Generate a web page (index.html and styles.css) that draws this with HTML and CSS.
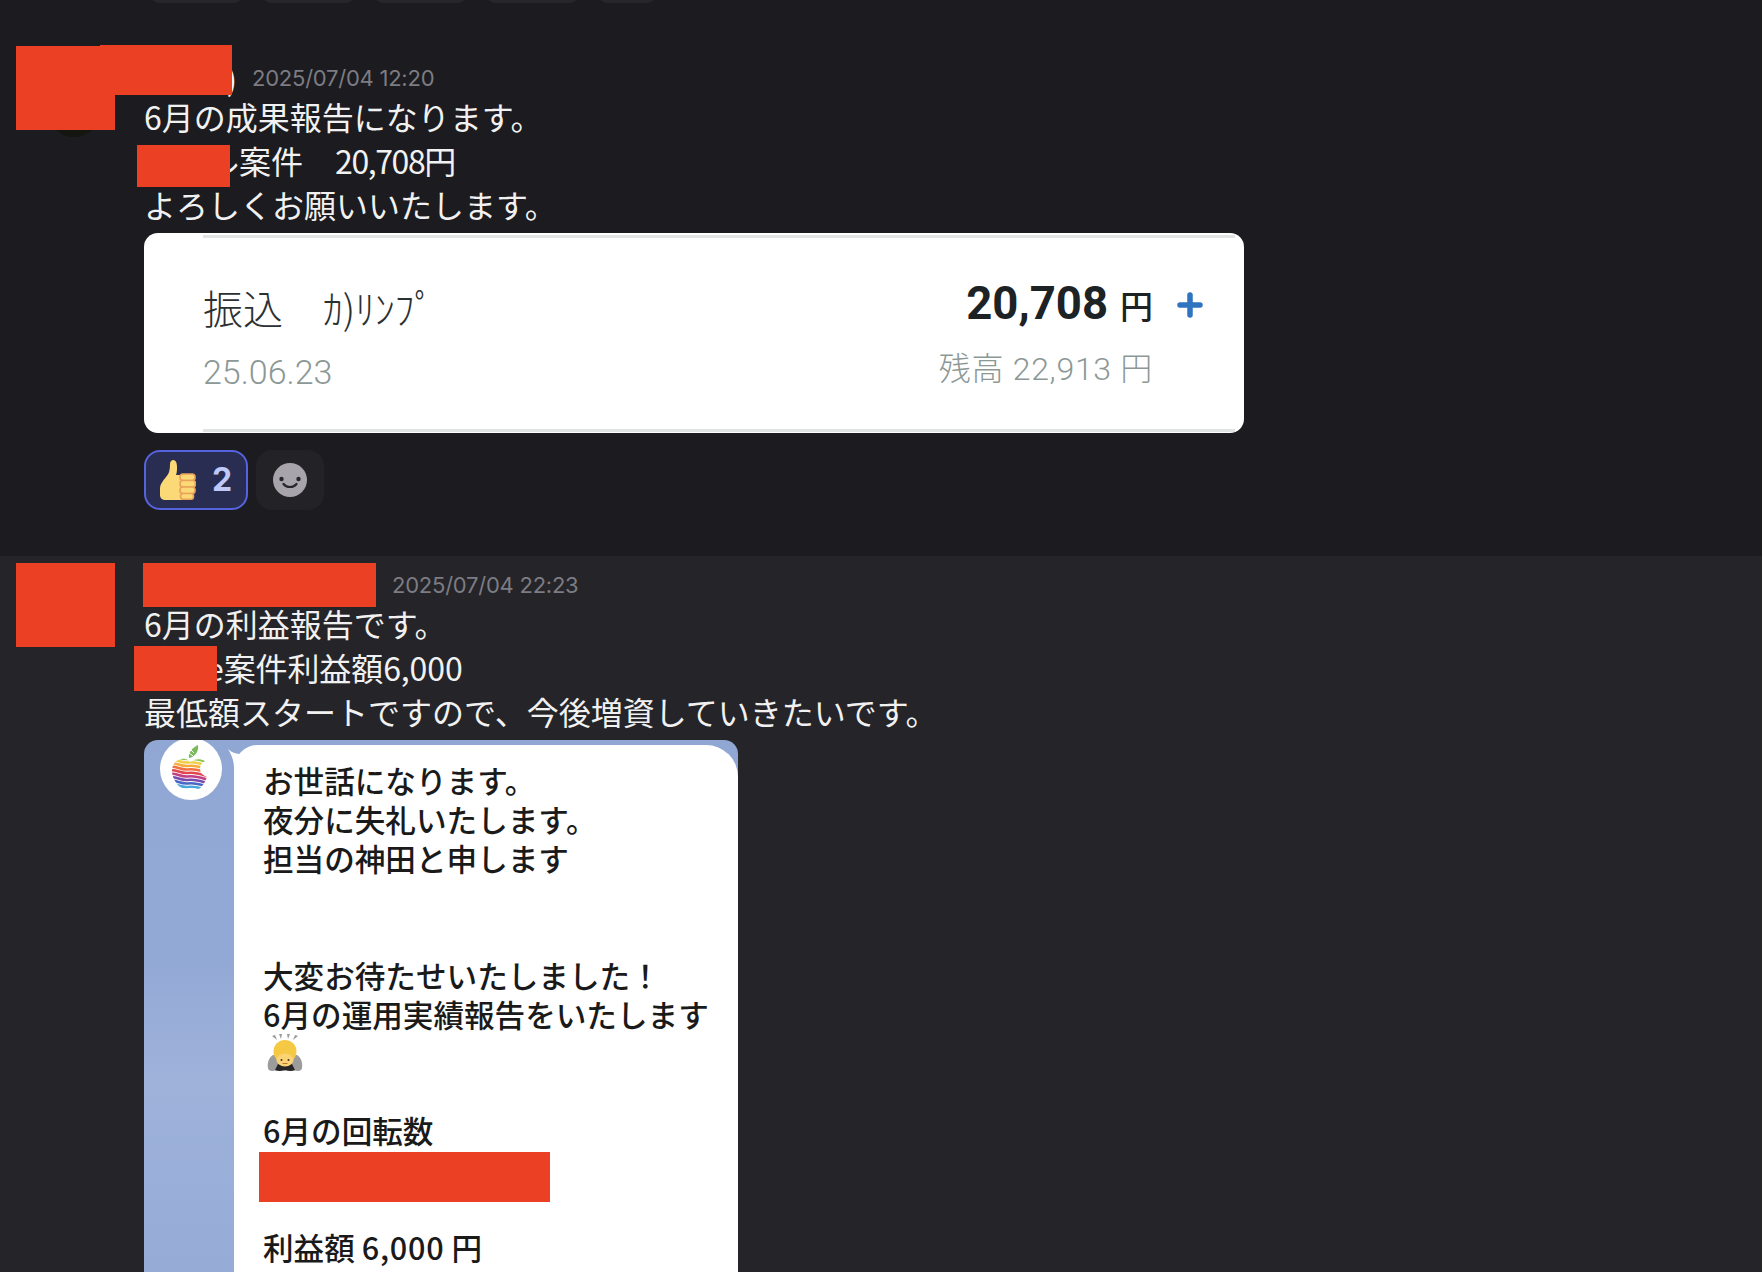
FILE: index.html
```html
<!DOCTYPE html>
<html lang="ja">
<head>
<meta charset="utf-8">
<title>成果報告</title>
<link rel="stylesheet" href="styles.css">
</head>
<body>
<main class="page">
  <div class="chips"><span class="chip"></span><span class="chip"></span><span class="chip"></span><span class="chip"></span><span class="chip chip-small"></span></div>

  <article class="msg msg-a">
    <div class="avatar-col"><div class="avatar"></div></div>
    <div class="msg-body">
      <header class="meta"><span class="name name-a">)</span><time class="stamp">2025/07/04 12:20</time></header>
      <p class="line">6月の成果報告になります。</p>
      <p class="line lead">ル案件　<span class="num-tight">20,708</span>円</p>
      <p class="line">よろしくお願いいたします。</p>
      <div class="bank-card">
        <div class="bank-inner">
          <div class="bank-left">
            <div class="bank-title">振込　<span class="kana">ｶ)ﾘﾝﾌﾟ</span></div>
            <div class="bank-date">25.06.23</div>
          </div>
          <div class="bank-right">
            <div class="amount"><span class="amount-num">20,708</span><span class="amount-yen">円</span></div>
            <svg class="plus" viewBox="0 0 26 26" aria-hidden="true"><path d="M13 3v20M3 13h20" fill="none" stroke="#2f74c0" stroke-width="5.5" stroke-linecap="round"/></svg>
            <div class="balance">残高 22,913 円</div>
          </div>
        </div>
      </div>
      <div class="reactions">
        <button class="react react-on">
          <svg class="thumb" viewBox="0 0 36 40" aria-hidden="true">
            <path d="M0 29c0-5 3-8 6-12 3-3 4-7 4-13 0-3 2-4 3-4 3 0 4 3 4 7 0 3 0 5-1 8h10v25H6c-4 0-6-2-6-5z" fill="#fcd977"/>
            <g fill="#fcd977" stroke="#e9a35a" stroke-width="1.7">
              <rect x="20" y="14" width="15" height="6.500" rx="3"/>
              <rect x="20" y="20.500" width="15.500" height="6.500" rx="3"/>
              <rect x="20" y="27" width="15" height="6.500" rx="3"/>
              <rect x="20.500" y="33.500" width="13" height="5.800" rx="2.800"/>
            </g>
          </svg>
          <span class="react-count">2</span>
        </button>
        <button class="react react-add">
          <svg class="face" viewBox="0 0 34 34" aria-hidden="true">
            <circle cx="17" cy="17" r="17" fill="#a7a5ab"/>
            <circle cx="8.500" cy="16" r="2.200" fill="#26262b"/>
            <circle cx="25.500" cy="16" r="2.200" fill="#26262b"/>
            <path d="M10.500 21c3 4 10 4 13 0" fill="none" stroke="#26262b" stroke-width="2.200" stroke-linecap="round"/>
          </svg>
        </button>
      </div>
    </div>
  </article>

  <article class="msg msg-b">
    <div class="avatar-col"></div>
    <div class="msg-body">
      <header class="meta"><span class="name name-b"></span><time class="stamp">2025/07/04 22:23</time></header>
      <p class="line">6月の利益報告です。</p>
      <p class="line lead lead-e">e案件利益額6,000</p>
      <p class="line">最低額スタートですので、今後増資していきたいです。</p>
      <div class="chat-shot">
        <div class="chat-side">
          <svg class="logo" viewBox="0 0 62 62" aria-hidden="true">
            <defs><clipPath id="apple"><path d="M30 24c4-3 10-4 15-1-3 2-5 4-5 8 0 3 2 6 7 8-2 5-5 11-9 12-3 0-5-1-7-1s-4 1-6 1c-6 0-13-10-13-18 0-10 8-13 13-12 2 0 3 1 5 3z"/></clipPath></defs>
            <circle cx="31" cy="31" r="31" fill="#fff"/>
            <path d="M29 20c-1-5 3-10 9-13 1 6-3 12-9 13z" fill="#79bb58"/>
            <path d="M31 12l3 3M29 15l4 3" stroke="#fff" stroke-width="1" fill="none"/>
            <g clip-path="url(#apple)" fill="none" stroke-width="2.500">
              <path d="M8 19c7-3 12 3 20 2s12 1 22 4" stroke="#8fc452"/>
              <path d="M8 22.500c7-3 12 3 20 2s12 1 22 4" stroke="#f0cf4a"/>
              <path d="M8 26c7-3 12 3 20 2s12 1 22 4" stroke="#f6ac3c"/>
              <path d="M8 29.500c7-3 12 3 20 2s12 1 22 4" stroke="#f0703f"/>
              <path d="M8 33c7-3 12 3 20 2s12 1 22 4" stroke="#e0474e"/>
              <path d="M8 36.500c7-3 12 3 20 2s12 1 22 4" stroke="#c03f86"/>
              <path d="M8 40c7-3 12 3 20 2s12 1 22 4" stroke="#7a4bab"/>
              <path d="M8 43.500c7-3 12 3 20 2s12 1 22 4" stroke="#4a67c4"/>
              <path d="M8 47c7-3 12 3 20 2s12 1 22 4" stroke="#4aa6dc"/>
              <path d="M8 50.500c7-3 12 3 20 2s12 1 22 4" stroke="#7fd4d8"/>
            </g>
          </svg>
        </div>
        <div class="bubble">
          <svg class="tail" viewBox="0 0 24 30" aria-hidden="true"><path d="M0 1c5 5 12 7 24 2v27H6V20C6 12 3 6 0 1z" fill="#fff"/></svg>
          <div class="b-line">お世話になります。</div>
          <div class="b-line">夜分に失礼いたします。</div>
          <div class="b-line">担当の神田と申します</div>
          <div class="b-line">&nbsp;</div>
          <div class="b-line">&nbsp;</div>
          <div class="b-line">大変お待たせいたしました！</div>
          <div class="b-line">6月の運用実績報告をいたします</div>
          <div class="b-emoji"><svg class="bow" viewBox="0 0 38 40" aria-hidden="true">
              <path d="M6 3l3-1 2 5zM13 1h3l-1 5zM21 1h3l-2 5zM29 2l3 1-5 4z" fill="#9a9a9a"/>
              <path d="M7 22C3 24 1 30 2 35c0 2 2 3 4 3l7-1c4-1 6 1 6 1s2-2 6-1l7 1c2 0 4-1 4-3 1-5-1-11-5-13z" fill="#9c9c9c"/>
              <path d="M12 31h14l3 6c-3 1.500-7 1-10 0-3 1-7 1.500-10 0z" fill="#262626"/>
              <ellipse cx="19" cy="18.500" rx="11.500" ry="11.500" fill="#f6c945"/>
              <ellipse cx="19" cy="27" rx="8.500" ry="6.500" fill="#fbd274"/>
              <circle cx="15.500" cy="27" r="1" fill="#4a3520"/><circle cx="22.500" cy="27" r="1" fill="#4a3520"/>
              <path d="M16.500 30.500h5" stroke="#b8763c" stroke-width="1" fill="none"/>
            </svg></div>
          <div class="b-line">&nbsp;</div>
          <div class="b-line">6月の回転数</div>
          <div class="b-line">&nbsp;</div>
          <div class="b-line">&nbsp;</div>
          <div class="b-line">利益額 <span class="tight">6,000</span> 円</div>
        </div>
      </div>
    </div>
  </article>

  <div class="redact r1"></div>
  <div class="redact r2"></div>
  <div class="redact r3"></div>
  <div class="redact r4"></div>
  <div class="redact r5"></div>
  <div class="redact r6"></div>
  <div class="redact r7"></div>
</main>
</body>
</html>
```
FILE: styles.css
```css
* { box-sizing: border-box; }
html, body { margin: 0; padding: 0; background: #1b1b20; }
body { font-family: "Noto Sans CJK JP", "Noto Sans", sans-serif; overflow: hidden; }
.page { position: relative; width: 1762px; height: 1272px; overflow: hidden; }

.chips { display: flex; gap: 19px; height: 3px; padding-left: 150px; overflow: hidden; background: #1b1b20; }
.chip { flex: none; width: 93px; height: 24px; margin-top: -21px; border-radius: 9px; background: #26262b; }
.chip-small { width: 58px; }

.msg { display: grid; grid-template-columns: 144px 1fr; }
.msg-a { height: 553px; padding-top: 57px; background: #1b1b20; }
.msg-b { height: 716px; padding-top: 11px; background: #242429; }
.avatar-col { padding: 0 0 0 47px; }
.avatar { width: 54px; height: 54px; margin-top: 23px; border-radius: 50%; background: #14160f; }

.meta { display: flex; align-items: center; gap: 15px; height: 36px; }
.name { font-weight: 400; font-size: 30px; line-height: 36px; color: #f6f6f6; text-align: right; }
.name-a { width: 93px; }
.name-b { width: 233px; }
.stamp { font-family: Inter, "Liberation Sans", sans-serif; font-size: 22px; letter-spacing: -0.24px; color: #7d7c82; }

.line { margin: 0; height: 44px; font-size: 32px; line-height: 40px; color: #f1f1f1; white-space: pre; }
.lead { padding-left: 63px; }
.lead-e { padding-left: 62px; letter-spacing: -0.1px; }
.num-tight { letter-spacing: -1.4px; }

.bank-card { width: 1100px; height: 200px; margin-top: 5px; padding: 2px 9px 1px 59px; border-radius: 14px; background: #fff; }
.bank-inner { display: flex; justify-content: space-between; height: 100%; padding: 47px 32px 0 0; border-top: 3px solid #e2e4e3; border-bottom: 3px solid #e2e4e3; }
.bank-title { height: 44px; font-size: 40px; font-weight: 300; line-height: 44px; color: #2b3032; white-space: pre; }
.kana { letter-spacing: -0.3px; }
.bank-date { margin-top: 23px; font-family: Roboto, sans-serif; font-size: 34px; font-weight: 300; line-height: 40px; color: #8c9896; }
.bank-right { display: grid; grid-template-columns: auto 26px; column-gap: 24px; align-content: start; margin-top: -3px; justify-items: end; }
.amount { display: flex; align-items: baseline; gap: 12px; height: 44px; line-height: 44px; color: #1d2224; }
.amount-num { font-family: Roboto, sans-serif; font-size: 45.500px; font-weight: 700; }
.amount-yen { font-size: 33px; font-weight: 500; }
.plus { width: 26px; height: 26px; margin-top: 10px; }
.balance { margin-top: 23px; font-size: 32px; font-weight: 300; line-height: 40px; color: #8c9896; font-family: Roboto, "Noto Sans CJK JP", sans-serif; letter-spacing: 0.7px; white-space: nowrap; }

.reactions { display: flex; gap: 8px; margin-top: 17px; }
.react { display: flex; align-items: center; justify-content: center; height: 60px; padding: 0; border: 0; border-radius: 16px; }
.react-on { gap: 16px; width: 104px; border: 2px solid #5663de; background: #2a2d52; }
.react-add { width: 68px; background: #222227; }
.thumb { width: 36px; height: 40px; }
.react-count { font-family: Inter, sans-serif; font-size: 32px; font-weight: 700; line-height: 1; color: #bfc8f6; }
.face { width: 34px; height: 34px; }

.chat-shot { display: flex; width: 594px; height: 600px; margin-top: 5px; overflow: hidden; border-radius: 14px 14px 0 0; background: linear-gradient(180deg, #90a7d4 0, #93a9d5 220px, #9eb2da 340px, #96acd7 520px); }
.chat-side { flex: none; width: 90px; }
.logo { display: block; width: 62px; height: 62px; margin: -2px 0 0 16px; }
.bubble { position: relative; flex: 1; margin-top: 5px; padding: 16px 0 0 29px; border-radius: 24px 32px 0 0; background: #fff; }
.tail { position: absolute; left: -6px; top: 3px; width: 24px; height: 30px; }
.b-line { height: 39px; font-size: 30.600px; font-weight: 500; line-height: 39px; color: #1a1a1a; white-space: pre; }
.b-emoji { height: 39px; }
.bow { display: block; width: 38px; height: 40px; margin: -1px 0 0 3px; }
.tight { letter-spacing: 0.8px; }

.redact { position: absolute; background: #ec4025; }
.r1 { left: 16px; top: 46px; width: 99px; height: 84px; }
.r2 { left: 100px; top: 45px; width: 132px; height: 50px; }
.r3 { left: 137px; top: 145px; width: 93px; height: 42px; }
.r4 { left: 16px; top: 563px; width: 99px; height: 84px; }
.r5 { left: 143px; top: 563px; width: 233px; height: 44px; }
.r6 { left: 134px; top: 646px; width: 83px; height: 45px; }
.r7 { left: 259px; top: 1152px; width: 291px; height: 50px; }
```
